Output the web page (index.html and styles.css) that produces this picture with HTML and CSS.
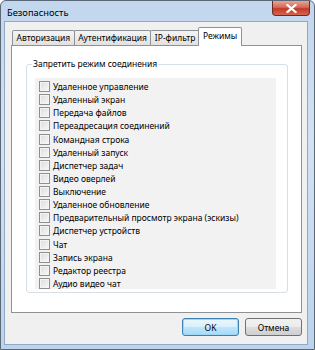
FILE: index.html
```html
<!DOCTYPE html>
<html lang="ru">
<head>
    <meta charset="UTF-8">
    <title>Безопасность</title>
    <link rel="stylesheet" href="styles.css">
</head>
<body>
    <div class="window">
        <!-- Title bar -->
        <div class="titlebar">
            <span class="title">Безопасность</span>
            <span class="close">
                <svg width="11" height="9" viewBox="0 0 11 9">
                    <path d="M1.5 1 L9.5 8 M9.5 1 L1.5 8" stroke="#fff" stroke-width="2.2" stroke-linecap="square"/>
                </svg>
            </span>
        </div>

        <div class="client">
            <!-- Tabs -->
            <div class="tabs">
                <div class="tab">Авторизация</div>
                <div class="tab">Аутентификация</div>
                <div class="tab">IP-фильтр</div>
                <div class="tab active">Режимы</div>
            </div>

            <div class="panel">
                <div class="group">
                    <span class="legend">Запретить режим соединения</span>
                    <div class="list">
                        <label class="row"><span class="box"></span>Удаленное управление</label>
                        <label class="row"><span class="box"></span>Удаленный экран</label>
                        <label class="row"><span class="box"></span>Передача файлов</label>
                        <label class="row"><span class="box"></span>Переадресация соединений</label>
                        <label class="row"><span class="box"></span>Командная строка</label>
                        <label class="row"><span class="box"></span>Удаленный запуск</label>
                        <label class="row"><span class="box"></span>Диспетчер задач</label>
                        <label class="row"><span class="box"></span>Видео оверлей</label>
                        <label class="row"><span class="box"></span>Выключение</label>
                        <label class="row"><span class="box"></span>Удаленное обновление</label>
                        <label class="row"><span class="box"></span>Предварительный просмотр экрана (эскизы)</label>
                        <label class="row"><span class="box"></span>Диспетчер устройств</label>
                        <label class="row"><span class="box"></span>Чат</label>
                        <label class="row"><span class="box"></span>Запись экрана</label>
                        <label class="row"><span class="box"></span>Редактор реестра</label>
                        <label class="row"><span class="box"></span>Аудио видео чат</label>
                    </div>
                </div>
            </div>

            <!-- Dialog buttons -->
            <div class="buttons">
                <button class="btn default">OK</button>
                <button class="btn">Отмена</button>
            </div>
        </div>
    </div>
</body>
</html>
```

FILE: styles.css
```css
* {
    box-sizing: border-box;
}
body {
    margin: 0;
    font-family: "Noto Sans", "DejaVu Sans", sans-serif;
    font-size: 8.5px;
    color: #000;
    background: #fff;
}
.window {
    width: 315px;
    height: 350px;
    border: 1px solid #5a6878;
    border-radius: 6px 6px 0 0;
    background: linear-gradient(to bottom, #c2d6ee 0%, #d3e2f3 40%, #bcd3ee 100%);
    padding: 0 6px 4px 3px;
    display: flex;
    flex-direction: column;
}
.titlebar {
    height: 20px;
    flex: none;
    display: flex;
    align-items: flex-start;
    justify-content: space-between;
}
.title {
    margin: 5px 0 0 3px;
    font-size: 9.3px;
}
.close {
    width: 38px;
    height: 15px;
    margin-right: -2px;
    border: 1px solid #6b2b22;
    border-top: none;
    border-radius: 0 0 4px 4px;
    background: linear-gradient(to bottom, #e8a593 0%, #d46a56 45%, #c2392a 55%, #d9644d 100%);
    display: flex;
    align-items: center;
    justify-content: center;
}
.client {
    flex: 1;
    background: #f0f0f0;
    border: 1px solid #93a8c2;
    padding: 5px 5px 0 6px;
    display: flex;
    flex-direction: column;
}
.tabs {
    display: flex;
    align-items: flex-end;
    height: 18px;
    padding-left: 1px;
    position: relative;
    z-index: 1;
}
.tab {
    height: 15px;
    line-height: 13px;
    padding: 0 3.5px;
    border: 1px solid #8e9297;
    border-bottom: none;
    margin-right: -1px;
    background: linear-gradient(to bottom, #f4f4f4, #e1e1e1);
    border-radius: 2px 2px 0 0;
}
.tab.active {
    height: 19px;
    line-height: 15px;
    margin: 0 -2px -1px -1px;
    padding: 0 4px;
    background: #fff;
}
.panel {
    height: 268px;
    flex: none;
    background: #fff;
    border: 1px solid #8e9297;
    padding: 18px 13px 0 14px;
}
.group {
    height: 229px;
    border: 1px solid #d5dfe5;
    border-radius: 3px;
    position: relative;
    padding: 13px 11px 0 8px;
}
.legend {
    position: absolute;
    top: -7px;
    left: 5px;
    padding: 0 1px;
    background: #fff;
    line-height: 12px;
}
.list {
    background: #f2f2f2;
    height: 211px;
    padding-top: 2px;
    overflow: hidden;
}
.row {
    display: flex;
    align-items: center;
    height: 13.13px;
    padding-left: 4px;
    white-space: nowrap;
}
.box {
    width: 11px;
    height: 11px;
    border: 1px solid #8f8f8f;
    background: linear-gradient(135deg, #dcdcdc, #f8f8f8);
    box-shadow: inset 0 0 0 1px #f4f4f4;
    margin-right: 3px;
    flex: none;
}
.buttons {
    display: flex;
    justify-content: flex-end;
    gap: 6px;
    padding-top: 5px;
}
.btn {
    width: 57px;
    height: 18px;
    font-family: inherit;
    font-size: 8.5px;
    padding: 0;
    border: 1px solid #707070;
    border-radius: 3px;
    background: linear-gradient(to bottom, #f2f2f2 0%, #ebebeb 50%, #dddddd 51%, #cfcfcf 100%);
    color: #000;
}
.btn.default {
    border-color: #3c7fb1;
    box-shadow: inset 0 0 0 1px #9ed7f5;
    background: linear-gradient(to bottom, #eaf6fd 0%, #d9f0fc 50%, #bee6fd 51%, #a7d9f5 100%);
}
```
